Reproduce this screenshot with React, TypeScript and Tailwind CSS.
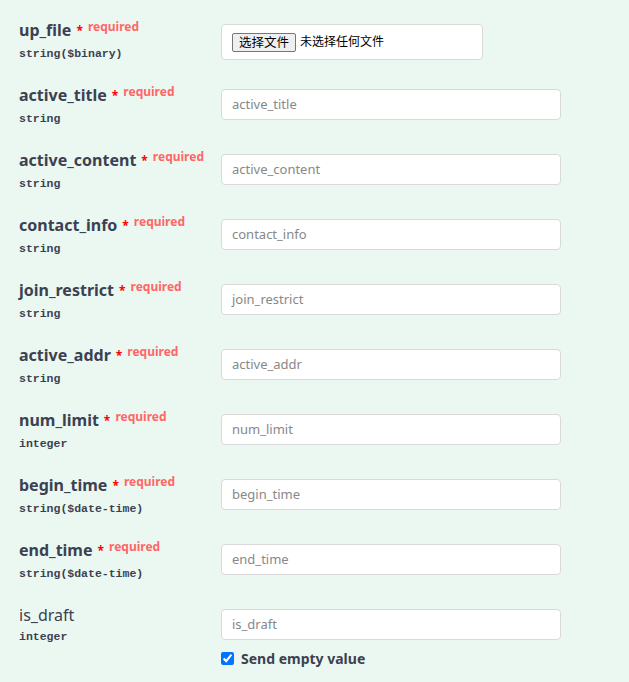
import React from "react";

type Param = { name: string; type: string; required: boolean; file?: boolean };

const params: Param[] = [
  { name: "up_file", type: "string($binary)", required: true, file: true },
  { name: "active_title", type: "string", required: true },
  { name: "active_content", type: "string", required: true },
  { name: "contact_info", type: "string", required: true },
  { name: "join_restrict", type: "string", required: true },
  { name: "active_addr", type: "string", required: true },
  { name: "num_limit", type: "integer", required: true },
  { name: "begin_time", type: "string($date-time)", required: true },
  { name: "end_time", type: "string($date-time)", required: true },
  { name: "is_draft", type: "integer", required: false },
];

function ParamRow({ p, last }: { p: Param; last?: boolean }) {
  return (
    <div className={`flex items-start ${last ? "" : "h-[65px]"}`}>
      {/* name + type */}
      <div className="w-[221px] shrink-0 pl-[19px]">
        <div className="flex items-start leading-[20px] text-[#3b4151]">
          <span className={`text-[16px] ${p.required ? "font-bold" : "font-normal"}`}>
            {p.name}
          </span>
          {p.required && (
            <>
              <span className="ml-[5px] text-[12px] font-bold text-[#ff0000] leading-[22px]">*</span>
              <span className="ml-[5px] -mt-[3px] text-[12px] font-bold text-[#ff6666]">
                required
              </span>
            </>
          )}
        </div>
        <div className="mt-[5px] font-['Liberation_Mono',monospace] text-[11.5px] font-bold leading-[14px] text-[#3b4151]">
          {p.type}
        </div>
      </div>

      {/* input */}
      <div className="pt-[4px]">
        {p.file ? (
          <div className="flex h-[36px] w-[262px] items-center rounded-[4px] border border-[#d9d9d9] bg-white px-[10px]">
            <button className="h-[19px] rounded-[2px] border border-[#767676] bg-[#efefef] px-[6px] text-[12.5px] leading-[17px] text-black">
              选择文件
            </button>
            <span className="ml-[4px] text-[12px] text-black">未选择任何文件</span>
          </div>
        ) : (
          <div className="flex h-[31px] w-[340px] items-center rounded-[4px] border border-[#d9d9d9] bg-white px-[10px] text-[13px] text-[#888]">
            {p.name}
          </div>
        )}
        {last && (
          <label className="mt-[8px] flex items-center gap-[7px]">
            <input type="checkbox" defaultChecked className="m-0 h-[13px] w-[13px] accent-[#0075ff]" />
            <span className="text-[14px] font-bold text-[#3b4151]">Send empty value</span>
          </label>
        )}
      </div>
    </div>
  );
}

export default function App() {
  return (
    <div className="min-h-[682px] bg-[#ebf8f2] pt-[20px] font-['Noto_Sans','Noto_Sans_CJK_SC',sans-serif]">
      {params.map((p, i) => (
        <ParamRow key={p.name} p={p} last={i === params.length - 1} />
      ))}
    </div>
  );
}
